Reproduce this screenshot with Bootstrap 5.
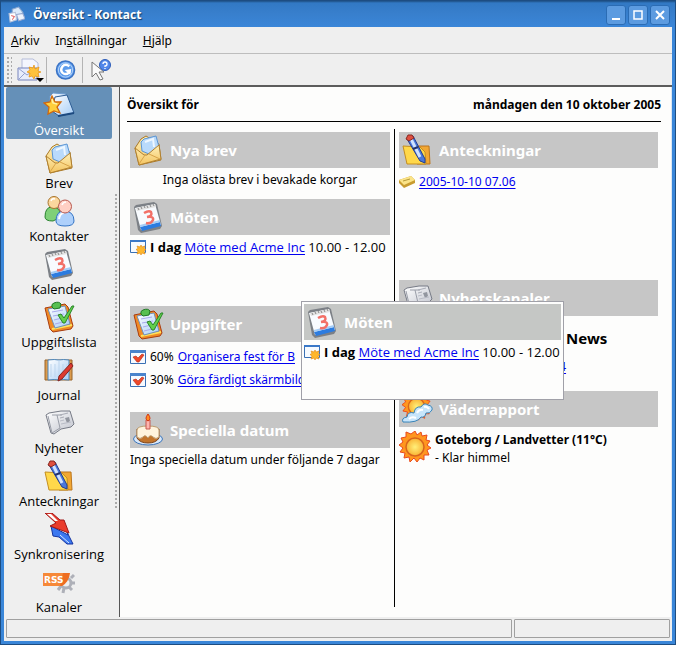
<!DOCTYPE html>
<html lang="sv">
<head>
<meta charset="utf-8">
<meta name="viewport" content="width=device-width, initial-scale=1">
<title>Översikt - Kontact</title>
<link href="https://cdn.jsdelivr.net/npm/bootstrap@5.3.0/dist/css/bootstrap.min.css" rel="stylesheet">
<style>
body { font-family: "Noto Sans", "Open Sans", sans-serif; font-size: 12px; line-height: 18px; color: #000; background: #1c4a7c; }
button { font: inherit; color: inherit; background: none; border: 0; padding: 0; }
a { color: #0000f0; text-underline-offset: 2px; }
.window { background: #efefef; border: 4px solid #3a86d8; border-top: 0; outline: 1px solid #1d4d82; outline-offset: -1px; min-height: 100vh; }
.titlebar { height: 27px; margin: 0 -4px; padding: 2px 6px 0 8px; background: linear-gradient(#143c66 0, #3279c4 3px, #387fcd 14px, #3a86d8 100%); color: #fff; font-family: "Open Sans", sans-serif; font-weight: 700; text-shadow: 1px 1px 1px #123c6c; }
.wbtns { gap: 2px; }
.wbtn { width: 20px; height: 20px; background: #5c9be0; border: 1px solid #2b6cb4; border-radius: 3px; display: grid; place-items: center; }
.menubar { height: 27px; padding: 2px 0 0 7px; border-bottom: 1px solid #bdbdbd; }
.toolbar { height: 33px; border-bottom: 2px solid #5c5c5c; padding-left: 3px; }
.grip { width: 5px; height: 26px; background: radial-gradient(circle at 1px 1px, #aaa 1px, transparent 1px) 0 0/4px 4px; }
.sep { width: 1px; height: 26px; background: #b4b4b4; margin: 0 8px 0 2px; }
.sep-wide { margin-left: 6px; }
.sidebar { width: 116px; padding: 0 7px 0 2px; border-right: 1px solid #555; position: relative; font-family: "Open Sans", sans-serif; font-size: 13px; }
.sidebar::after { content: ""; position: absolute; right: 2px; top: 107px; bottom: 107px; width: 2px; background: radial-gradient(circle at 1px 1px, #aaa 1px, transparent 1px) 0 0/2px 4px; }
.side-item { height: 53px; padding-top: 1px; border-radius: 2px; line-height: 18px; }
.side-item.active { background: #6590b8; color: #fff; height: 52px; margin-bottom: 1px; padding-top: 2px; }
.pic { width: 32px; height: 32px; display: block; flex: none; }
.mini { width: 16px; height: 16px; display: block; flex: none; }
.page-area { background: #fdfdfc; padding: 9px 10px 10px 7px; border-right: 1px solid #dce6f0; min-width: 0; }
.page-head { height: 26px; border-bottom: 1px solid #000; padding-bottom: 6px; font-weight: 700; }
.panes { margin-top: 7px; }
.left-pane { width: 50.2%; padding: 3px 4px 0 3px; border-right: 1px solid #000; min-width: 0; overflow: hidden; }
.right-pane { padding: 3px 3px 0 4px; min-width: 0; }
.panel-head { height: 36px; background: #c6c6c6; color: #fff; font-size: 15px; line-height: 34px; font-weight: 700; padding-left: 2px; gap: 6px; margin: 0; }
.s-mail { min-height: 67px; } .s-meet { min-height: 107px; } .s-todo { min-height: 106px; }
.s-notes { min-height: 148px; } .s-news { min-height: 111px; }
.line { height: 23px; white-space: nowrap; }
.meeting { font-family: "Open Sans", sans-serif; font-size: 13px; }
.note { padding-top: 3px; }
.news-title { font-size: 15px; line-height: 22px; font-weight: 700; padding: 11px 0 0 167px; }
.news-link { width: 167px; padding-top: 9px; }
.ghost { position: absolute; left: 301px; top: 301px; width: 263px; height: 99px; background: #fdfdfc; border: 1px solid #a0a0a8; padding: 2px; }
.ghost .panel-head { background: #c5c7c5; }
.statusbar { height: 24px; padding: 2px 2px 3px; gap: 2px; }
.status-cell { border: 1px solid #a0a0a0; border-radius: 1px; }
.status-end { width: 156px; }
</style>
<script src="https://cdn.jsdelivr.net/npm/bootstrap@5.3.0/dist/js/bootstrap.bundle.min.js"></script>
</head>
<body>
<svg width="0" height="0" class="position-absolute" aria-hidden="true">
<defs>
<linearGradient id="gGold" x2="0" y2="1"><stop offset="0" stop-color="#fff0b8"/><stop offset="1" stop-color="#f4c460"/></linearGradient>
<linearGradient id="gBlue" x2="1" y2="1"><stop offset="0" stop-color="#fff"/><stop offset="1" stop-color="#a4ccf6"/></linearGradient>
<linearGradient id="gGrey" x2="1" y2="1"><stop offset="0" stop-color="#fff"/><stop offset="1" stop-color="#bfc2cc"/></linearGradient>
<radialGradient id="gSun"><stop offset="0" stop-color="#fff07a"/><stop offset="1" stop-color="#f9b233"/></radialGradient>
<symbol id="i-star" viewBox="0 0 32 32"><path d="M7 7l3-3 13 1-2 15-14 1z" fill="url(#gBlue)" stroke="#6c9cd0"/><path d="M12 8l12-2 7 18-15 3-7-5z" fill="url(#gBlue)" stroke="#2c5c94"/><path d="M15 27l16-3" stroke="#1d4a80" stroke-width="2"/><path d="M9 7l3 6 6 0-4 5 3 6-6-2-6 3 1-7-5-4 6-1z" fill="#ffcf3c" stroke="#d06a10" stroke-width="1.3"/><path d="M9 10l1 4 4 1" fill="none" stroke="#fff3a8" stroke-width="1.5"/></symbol>
<symbol id="i-mail" viewBox="0 0 32 32"><path d="M3 14L9 5l5-3 13 8 2 16-22 5z" fill="url(#gGold)" stroke="#a87828"/><path d="M9 8l3-3 12-3 3 11-10 7-7-3z" fill="#b9dafb" stroke="#5c96d4"/><path d="M13 8l8-3 1 8" fill="none" stroke="#eef7ff" stroke-width="2"/><path d="M3 14l9 7 3 0L27 11l2 14-22 6z" fill="url(#gGold)" stroke="#b08030"/><path d="M7 30l6-9M28 25l-11-5" stroke="#d8a348"/></symbol>
<symbol id="i-people" viewBox="0 0 32 32"><path d="M2 22q0-10 7-10 9 0 9 10l-8 4q-8 0-8-4z" fill="#7fd078" stroke="#2a8230"/><circle cx="11" cy="7.500" r="6" fill="#fbd79e" stroke="#a8742c"/><path d="M13 26q0-10 8-10 10 0 10 10 0 5-9 5-9 0-9-5z" fill="#aed0fb" stroke="#3474c4"/><path d="M16 24q1-6 5-6" fill="none" stroke="#fff" stroke-width="2"/><circle cx="22" cy="11.500" r="6.500" fill="#ffd0c4" stroke="#b85a50"/><path d="M19 10q1-3 4-3M8 6q1-3 4-2" fill="none" stroke="#fff" stroke-width="1.500"/></symbol>
<symbol id="i-cal" viewBox="0 0 32 32"><path d="M2 6l2-2 18-3 3 2 5 22-2 3-19 4-3-3z" fill="#7c8086"/><path d="M3 7l20-4 6 21-20 5z" fill="#f8fbff"/><path d="M8 26l20-5 1 4-19 5z" fill="#2c7ce0"/><path d="M8 25l20-5" stroke="#a4ccf6" stroke-width="2"/><path d="M4 7L23 3l1 3L5 10z" fill="#e2e2e2"/><path d="M6 7l1 2M9 6l1 2M12 5l1 2M15 5l1 2M18 4l1 2M21 3l1 2" stroke="#888"/><path d="M12 12q5-3 7-1 2 4-4 5 7-1 6 3-2 4-7 3" fill="none" stroke="#f27068" stroke-width="2.500"/></symbol>
<symbol id="i-task" viewBox="0 0 32 32"><path d="M2 7l20-4 3 3 5 19-2 3-18 3-3-3z" fill="#f08a24" stroke="#a83c10"/><path d="M9 28l20-4" stroke="#ffe15a" stroke-width="2"/><path d="M5 8l17-3 5 18-15 4z" fill="url(#gBlue)" stroke="#7090b8"/><path d="M9 11l11-2M10 15l11-2M11 19l12-3M12 23l12-3" stroke="#a8a8ec"/><path d="M9 6q-1-3 2-4 5-2 7 1l-1 4-6 1z" fill="#58c050" stroke="#207824"/><path d="M15 14l3-1 3 4 8-12 2 0-9 17-2 0z" fill="#62cf4c" stroke="#2a862a"/></symbol>
<symbol id="i-journal" viewBox="0 0 32 32"><path d="M2 6h27v20H2z" fill="#dc9b4c" stroke="#98642a"/><path d="M5 6q7-1 11 0 4-1 10 0v20q-6-1-10 0-4-1-11 0z" fill="url(#gBlue)" stroke="#4c86bc"/><path d="M16 6v20M8 10v13M12 10v13M20 10v8M24 10v4" stroke="#bdd5ed"/><path d="M28 9l2 3-11 13-4 2 1-5z" fill="#dc3a30" stroke="#852420"/></symbol>
<symbol id="i-news" viewBox="0 0 32 32"><path d="M3 8l3-2 12-2h9l4 13-3 3-10 2-7 5-3-1z" fill="url(#gGrey)" stroke="#777b86"/><path d="M5 9l4 17 8-5-3-13M9 8h10" fill="none" stroke="#9a9ea8"/><path d="M17 8l8-2M17 11l4-1" stroke="#a9acb6"/><path d="M22 11l4-1 1 4-3 2z" fill="#92969f"/><path d="M17 14l4-1M18 17l10-2" stroke="#b9bcc6"/></symbol>
<symbol id="i-note" viewBox="0 0 32 32"><path d="M14 12l14 0 1 18-13 0z" fill="#f2a733" stroke="#bb751c"/><path d="M2 12l17 1 5 5 1 12-19 0z" fill="#ffd84a" stroke="#c48e20"/><path d="M6 5l2-3 4 0 12 23 0 4-5-2z" fill="#4a78dc" stroke="#243c90"/><path d="M10 5l9 18" stroke="#d0e2ff" stroke-width="3"/><path d="M5 5l2-4 4 0 2 3-5 3z" fill="#e05040" stroke="#892820"/><path d="M12 15l5-2" stroke="#24336c" stroke-width="2"/></symbol>
<symbol id="i-sync" viewBox="0 0 32 32"><path d="M8 13l17 9-1-3 6 12h-6l-8-7-6-1z" fill="#3c78f0" stroke="#1434a0"/><path d="M17 22l9 8" stroke="#d8e8ff"/><path d="M2 0h7l8 7h4l5 13L7 13l6-3z" fill="#ea3c2c" stroke="#a01818"/><path d="M4 1h4l7 7h-3z" fill="#fff"/></symbol>
<symbol id="i-rss" viewBox="0 0 32 32"><g fill="none" stroke="#aeb0b8" stroke-width="3"><circle cx="23" cy="17" r="5"/><path d="M28 12l3-3M29 17h3M26 21l3 3M21 22l-1 5M18 20l-3 4"/></g><path d="M0 7h27q-1 9-8 13H0z" fill="#ee6d20"/><path d="M0 7h20l-3 13H0z" fill="#f68838"/><text x="1" y="17" font-family="DejaVu Sans" font-size="9" font-weight="700" fill="#fff">RSS</text></symbol>
<symbol id="i-cake" viewBox="0 0 32 32"><ellipse cx="16" cy="25" rx="14.500" ry="6" fill="#d8e8fa" stroke="#3c74b8"/><path d="M5 15v9q3 5 11 5t11-5v-9z" fill="#c2752c" stroke="#7d4318"/><path d="M5 16q0-4 11-4t11 4v7q-3 3-6 0-3-3-5 1-3-4-5-1-3 3-6 0z" fill="#fff4dd" stroke="#bd9c70"/><path d="M14 6h4v9h-4z" fill="#ffb4ae" stroke="#c65850"/><path d="M16 0q4 5 0 7-4-2 0-7z" fill="#ff8a20" stroke="#d43410"/></symbol>
<symbol id="i-sun" viewBox="0 0 32 32"><path d="M16 0l2 4 4-3 1 4 5-1-1 5 4 1-3 4 4 3-4 2 2 5-5 0 0 5-4-2-3 4-3-4-4 4-1-5-5 1 1-5-5-1 3-4-4-3 4-3-2-4 5-1 0-5 5 2z" fill="#ff961f" stroke="#ea481c"/><circle cx="16" cy="16" r="9" fill="url(#gSun)" stroke="#d8641c" stroke-width="1.500"/></symbol>
<symbol id="i-weather" viewBox="0 0 32 32"><use href="#i-sun" width="29" height="29" x="1" y="-1"/><path d="M2 29q-2-4 4-5 1-6 7-4 1-7 7-6 3-5 7-2 5 1 4 5-2 4-6 3-1 5-5 4-3 6-18 5z" fill="#c7e5fb" stroke="#3984b8"/><path d="M16 20q2-4 6-3M8 26q3-3 7-1M23 14q3-1 5 2" fill="none" stroke="#fff" stroke-width="2"/></symbol>
<symbol id="i-meet" viewBox="0 0 16 16"><path d="M.5 1.500h15v12H.5z" fill="#f6faff" stroke="#3a70b4"/><path d="M0 1h16v2H0z" fill="#3a78c8"/><path d="M11 6l1 2 3-1-1 2.500 2 1-2 1.500 1 3-3-1-1 2-1-2-3 1 1-3-2-1.500 2-1-1-2.500 3 1z" fill="#ffb72c" stroke="#e2860c" stroke-width=".6"/></symbol>
<symbol id="i-check" viewBox="0 0 16 16"><path d="M.5 1.500h15v13H.5z" fill="#f6faff" stroke="#3a70b4"/><path d="M0 1h16v3H0z" fill="#4a84cc"/><path d="M3 8l3-1 2 2 4-4 2 1-5 7H7z" fill="#ee4828" stroke="#b02818" stroke-width=".6"/></symbol>
<symbol id="i-sticky" viewBox="0 0 16 16"><path d="M0 6l12-4 4 4v3L5 14 0 9z" fill="#c89c30"/><path d="M0 6l12-4 4 4L5 11z" fill="#fbe488"/><path d="M4 7l7-2" stroke="#b59a3c"/></symbol>
</defs>
</svg>

<div class="window d-flex flex-column">
  <header class="titlebar d-flex align-items-center">
    <svg width="17" height="17" viewBox="0 0 16 16" aria-hidden="true"><path d="M4 3l6-2 4 5-4 5-6-1z" fill="#dbeafa" stroke="#8ba8d0"/><path d="M1 7l6-1 1 7-6 2z" fill="#fff" stroke="#b8c4dc"/><path d="M3 9l3 1-2 3" stroke="#e47474" fill="none"/><path d="M8 8l6-1 2 5-6 2z" fill="#eef3fc" stroke="#95a8d0"/></svg>
    <span class="ms-2 me-auto">Översikt - Kontact</span>
    <div class="wbtns d-flex">
      <button class="wbtn" aria-label="Minimera"><svg width="12" height="12"><path d="M2 10h8" stroke="#fff" stroke-width="2"/></svg></button>
      <button class="wbtn" aria-label="Maximera"><svg width="12" height="12"><path d="M2 2h8v8H2z" fill="none" stroke="#fff" stroke-width="1.500"/></svg></button>
      <button class="wbtn" aria-label="Stäng"><svg width="12" height="12"><path d="M2 2l8 8M10 2l-8 8" stroke="#fff" stroke-width="2"/></svg></button>
    </div>
  </header>

  <nav class="menubar d-flex align-items-center gap-3" aria-label="Meny">
    <button><u>A</u>rkiv</button>
    <button>In<u>s</u>tällningar</button>
    <button><u>H</u>jälp</button>
  </nav>

  <div class="toolbar d-flex align-items-center" role="toolbar" aria-label="Verktyg">
    <span class="grip"></span>
    <button class="ms-1" aria-label="Nytt brev"><svg width="28" height="28" viewBox="0 0 28 28" class="d-block"><path d="M6 3h11l5 4v15H6z" fill="#f4f6fe" stroke="#b5bcd8"/><path d="M2 12h19v12H2z" fill="#e8edfc" stroke="#7784bc"/><path d="M2 12l9 7 10-7M2 24l7-7M21 24l-7-7" fill="none" stroke="#96a2d0"/><path d="M18 9l1 4 4-2-1 4 3 1-3 1 1 4-4-1-1 3-2-3-3 1 1-4-3-1 3-2-1-3 4 1z" fill="#ffc23c" stroke="#e8900c" stroke-width=".7"/><path d="M20 22h8l-4 4z"/></svg></button>
    <span class="sep"></span>
    <button aria-label="Uppdatera"><svg width="21" height="22" viewBox="0 0 22 22" class="d-block"><circle cx="11" cy="11" r="9.500" fill="#5d9cec" stroke="#3a72c4" stroke-width="1.500"/><circle cx="11" cy="11" r="7.500" fill="none" stroke="#b9d6fa"/><path d="M15 7q-4-3-7 0-3 4 0 7 4 3 7-1v-2" fill="none" stroke="#fff" stroke-width="2.500"/><path d="M10 11l7-1-1 6z" fill="#fff"/></svg></button>
    <span class="sep sep-wide"></span>
    <button aria-label="Vad är det här?"><svg width="20" height="24" viewBox="0 0 20 24" class="d-block"><path d="M1 4v15l4-4 4 7 3-1-4-7h5z" fill="#fafafa" stroke="#777"/><circle cx="14" cy="7" r="5.500" fill="#5287ea" stroke="#2d5cb8"/><path d="M12 6q0-2 2-2t2 2-2 2v1M14 10v1" fill="none" stroke="#fff" stroke-width="1.300"/></svg></button>
  </div>

  <div class="d-flex flex-grow-1">
    <nav class="sidebar d-flex flex-column flex-shrink-0" aria-label="Komponenter">
      <button class="side-item active"><svg class="pic mx-auto"><use href="#i-star"/></svg>Översikt</button>
      <button class="side-item"><svg class="pic mx-auto"><use href="#i-mail"/></svg>Brev</button>
      <button class="side-item"><svg class="pic mx-auto"><use href="#i-people"/></svg>Kontakter</button>
      <button class="side-item"><svg class="pic mx-auto"><use href="#i-cal"/></svg>Kalender</button>
      <button class="side-item"><svg class="pic mx-auto"><use href="#i-task"/></svg>Uppgiftslista</button>
      <button class="side-item"><svg class="pic mx-auto"><use href="#i-journal"/></svg>Journal</button>
      <button class="side-item"><svg class="pic mx-auto"><use href="#i-news"/></svg>Nyheter</button>
      <button class="side-item"><svg class="pic mx-auto"><use href="#i-note"/></svg>Anteckningar</button>
      <button class="side-item"><svg class="pic mx-auto"><use href="#i-sync"/></svg>Synkronisering</button>
      <button class="side-item"><svg class="pic mx-auto"><use href="#i-rss"/></svg>Kanaler</button>
    </nav>

    <main class="page-area flex-grow-1 d-flex flex-column">
      <div class="page-head d-flex justify-content-between"><span>Översikt för</span><span>måndagen den 10 oktober 2005</span></div>
      <div class="panes d-flex flex-grow-1">
        <div class="left-pane">
          <section class="s-mail">
            <h2 class="panel-head d-flex align-items-center"><svg class="pic"><use href="#i-mail"/></svg>Nya brev</h2>
            <div class="text-center note">Inga olästa brev i bevakade korgar</div>
          </section>
          <section class="s-meet">
            <h2 class="panel-head d-flex align-items-center"><svg class="pic"><use href="#i-cal"/></svg>Möten</h2>
            <div class="line meeting d-flex align-items-center gap-1"><svg class="mini"><use href="#i-meet"/></svg><span><b>I dag</b> <a href="#">Möte med Acme Inc</a> 10.00 - 12.00</span></div>
          </section>
          <section class="s-todo">
            <h2 class="panel-head d-flex align-items-center"><svg class="pic"><use href="#i-task"/></svg>Uppgifter</h2>
            <div class="note">
            <div class="line d-flex align-items-center gap-1"><svg class="mini"><use href="#i-check"/></svg><span>60%</span><a href="#">Organisera fest för B</a></div>
            <div class="line d-flex align-items-center gap-1"><svg class="mini"><use href="#i-check"/></svg><span>30%</span><a href="#">Göra färdigt skärmbild</a></div>
            </div>
          </section>
          <section>
            <h2 class="panel-head d-flex align-items-center"><svg class="pic"><use href="#i-cake"/></svg>Speciella datum</h2>
            <div class="note text-nowrap">Inga speciella datum under följande 7 dagar</div>
          </section>
        </div>
        <div class="right-pane flex-grow-1">
          <section class="s-notes">
            <h2 class="panel-head d-flex align-items-center"><svg class="pic"><use href="#i-note"/></svg>Anteckningar</h2>
            <div class="line d-flex align-items-center gap-1 pt-1"><svg class="mini"><use href="#i-sticky"/></svg><a href="#">2005-10-10 07.06</a></div>
          </section>
          <section class="s-news">
            <h2 class="panel-head d-flex align-items-center"><svg class="pic"><use href="#i-news"/></svg>Nyhetskanaler</h2>
            <div class="news-title">News</div>
            <div class="news-link text-end"><a href="#">4</a></div>
          </section>
          <section>
            <h2 class="panel-head d-flex align-items-center"><svg class="pic"><use href="#i-weather"/></svg>Väderrapport</h2>
            <div class="d-flex gap-1 pt-1">
              <svg class="pic"><use href="#i-sun"/></svg>
              <div><div class="fw-bold">Goteborg / Landvetter (11°C)</div><div>- Klar himmel</div></div>
            </div>
          </section>
        </div>
      </div>
    </main>
  </div>

  <footer class="statusbar d-flex">
    <div class="status-cell flex-grow-1"></div>
    <div class="status-cell status-end"></div>
  </footer>
</div>

<div class="ghost" aria-hidden="true">
  <div class="panel-head d-flex align-items-center"><svg class="pic"><use href="#i-cal"/></svg>Möten</div>
  <div class="line meeting d-flex align-items-center gap-1"><svg class="mini"><use href="#i-meet"/></svg><span><b>I dag</b> <a href="#" tabindex="-1">Möte med Acme Inc</a> 10.00 - 12.00</span></div>
</div>
</body>
</html>
